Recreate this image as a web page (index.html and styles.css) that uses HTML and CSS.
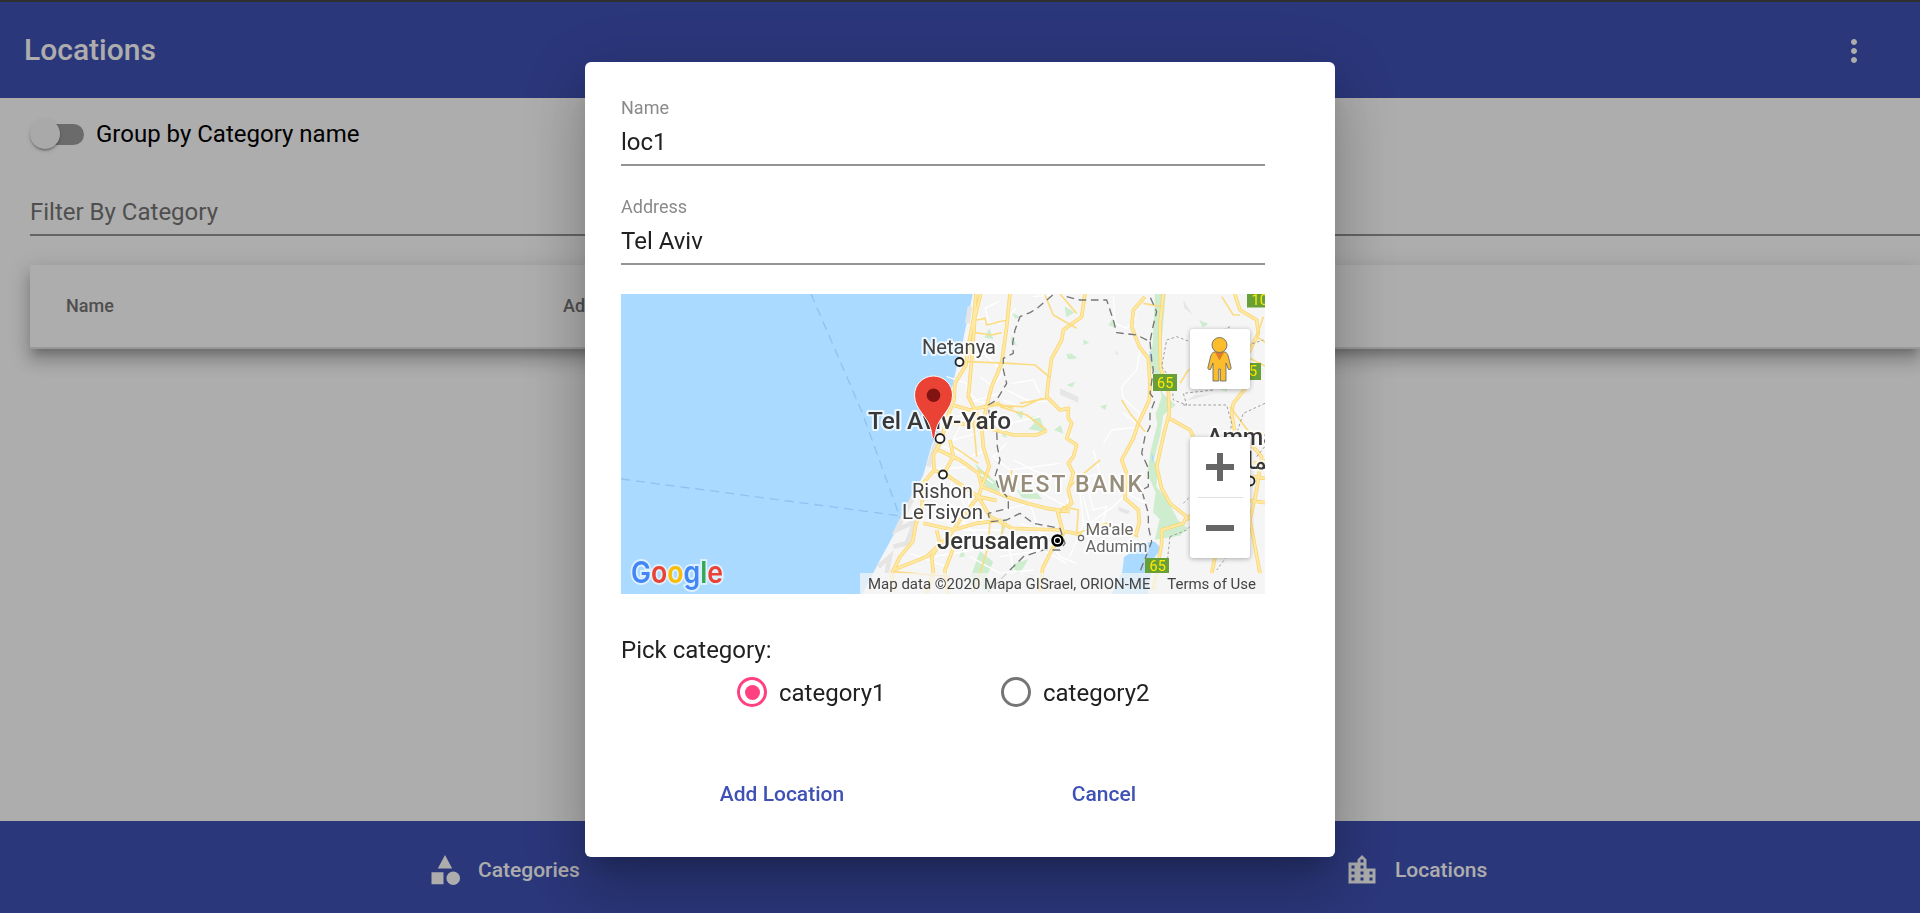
FILE: index.html
```html
<!DOCTYPE html>
<html lang="en">
<head>
<meta charset="utf-8">
<title>Locations</title>
<link rel="stylesheet" href="styles.css">
</head>
<body>
<div class="app">
  <header class="toolbar">
    <h1 class="toolbar-title">Locations</h1>
    <svg class="more" viewBox="0 0 24 24"><path d="M12 8c1.1 0 2-.9 2-2s-.9-2-2-2-2 .9-2 2 .9 2 2 2zm0 2c-1.1 0-2 .9-2 2s.9 2 2 2 2-.9 2-2-.9-2-2-2zm0 6c-1.1 0-2 .9-2 2s.9 2 2 2 2-.9 2-2-.9-2-2-2z"/></svg>
  </header>
  <main class="content">
    <div class="toggle"><span class="track"><span class="thumb"></span></span><span>Group by Category name</span></div>
    <div class="filter">Filter By Category</div>
    <div class="table"><span class="col-name">Name</span><span>Address</span></div>
  </main>
  <footer class="nav">
    <a class="nav-item"><svg class="nav-icon" viewBox="0 0 24 24"><path d="M12 2 7.2 11h9.600z M3 13.500h8v8H3z"/><circle cx="17.500" cy="17.500" r="4.500"/></svg>Categories</a>
    <a class="nav-item nav-item-end"><svg class="nav-icon" viewBox="0 0 24 24"><path d="M15 11V5l-3-3-3 3v2H3v14h18V11h-6zm-8 8H5v-2h2v2zm0-4H5v-2h2v2zm0-4H5V9h2v2zm6 8h-2v-2h2v2zm0-4h-2v-2h2v2zm0-4h-2V9h2v2zm0-4h-2V5h2v2zm6 12h-2v-2h2v2zm0-4h-2v-2h2v2z"/></svg>Locations</a>
  </footer>
</div>
<div class="backdrop">
  <section class="dialog">
    <label class="field"><span class="field-label">Name</span><span class="field-value">loc1</span></label>
    <label class="field"><span class="field-label">Address</span><span class="field-value">Tel Aviv</span></label>
    <div class="map">
      <svg class="map-canvas" viewBox="621 294 644 300">
        <rect class="sea" x="621" y="294" width="644" height="300"/>
        <path class="ferry" d="M811 294L862 412L901 520M621 479L720 492L901 516"/>
        <g transform="translate(860 290) scale(.33333)">
          <path class="land" d="M338 12L322 90L306 165L286 250L270 320L240 405L215 465L190 555L155 625L125 690L60 810L-5 935H1250V0H338Z"/>
          <path class="coast" d="M330 50L322 100M277 310L262 350M240 420L205 530M180 580L150 640L110 720L165 695L140 760L100 770M55 830L90 800L80 850"/>
          <!-- parks and forests -->
          <path class="park" d="M455 68l25 12-14 6zM614 50l28 18-23 14zM388 115l12 32-27-4zM455 135l16 32-18-8zM630 188l22 16-18 4zM620 285l25-8-8 15zM465 367l25-5-5 25zM507 380h32l18 46-52-8 18-18zM582 420l20-15 8 26zM430 425l12 18-15-4zM345 520l60 54 25 30-50-5zM470 600l62 10 15 18-60-3zM310 770l4 30-17 2zM360 783l40 32-22 50-46-5zM425 685l16 15-18 45zM465 820l40-12-27 45-30-15zM340 850l18 5-2 38-24-10zM365 860l35 15-8 30-26-5z"/>
          <path class="park" d="M885 12h32l-14 168 4 130 40 35-37 30-8 55-20 80 12 20-5 60 30 35 35 65 28 25-22 22-76 12 15-62-20-20 8-60-25-55 10-70 20-80-5-30 18-50-12-60-30-40 15-60zM615 50l28 17-22 10zM745 105l15-20 6 30zM670 148l18 10-17 8zM620 190l30 13-27 5zM622 284l22-8-9 14zM720 350l20-8-3 18zM1018 90l28 12-18 10zM1080 298l25-8-5 15z"/>
          <path class="grey" d="M600 295l55 25v18l-55-24zM970 30l28 45-26-22zM765 180l12 12-8 3zM1005 315l50-3-75 20zM775 650l36 13-8 10-27-10zM490 850l40 5-30 20z"/>
          <!-- Dead Sea and river -->
          <path class="water" d="M840 760L885 755L898 770L900 780L882 805L872 850L860 935H745L787 845L792 802L830 775ZM870 180l8 20-5 20-6-10zM874 490l8 10-6 20z"/>
          <!-- minor streets -->
          <path class="street" d="M415 35L375 55L385 90L335 80M470 55L420 100L370 95M520 20L575 15M260 260L320 280L325 330L390 340M330 220L360 180L430 245L400 290L360 260M320 300L350 330L420 310M280 380L370 370L370 440M310 390L280 450L350 430M430 330L480 350M455 280L520 270L540 310M440 300L500 330L560 335M400 410L450 400L540 380M250 470L330 500L380 480M210 540L330 530L400 580M180 590L300 620L350 700M280 560L260 640L330 670M330 620L310 720L430 720M440 460L400 500L450 540L600 520M460 510L530 545L590 560M430 660L510 640L540 730L600 720M530 600L620 650L640 550M480 700L540 720L600 800L650 820M240 730L220 800L340 780M300 690L380 760L500 780M150 790L260 830L270 900M330 800L420 850L520 840M440 740L460 840L530 870M420 800L550 780L620 820"/>
          <path class="street" d="M760 20L765 100L800 115L830 80M840 180L830 240L785 290L790 325L840 370L830 400L790 370M730 460L755 420L825 412M700 480L720 550L650 570M675 560L700 660L740 650L720 730M670 620L690 700L760 650L800 610L860 640M660 610L670 700L630 800"/>
          <!-- highways -->
          <g class="roads road-edge">
            <path id="hw1" d="M348 12L342 80L325 170L318 225L285 280L282 330L260 385L245 450L220 495L222 540L190 580L185 665L168 700L158 755L120 800L98 845L95 905M450 12L440 110L425 220L395 290L380 350L365 410L370 470L388 530L365 590L355 620L300 690L270 735L278 780L255 840L262 910M362 12L345 80L335 210L325 320L350 370L350 410M258 395L370 410L460 435L530 435L560 422M235 480L300 510L355 550L365 590L440 620L500 640L560 655L630 665M270 450L280 500L250 555M220 540L260 555L355 620L390 680L430 700L455 715L600 720L665 735M190 700L280 720L350 700L425 690M100 840L200 800L270 735M355 620L410 632M260 340L330 360L420 340M590 655L610 730L575 780L548 835L540 905M230 720L240 760L215 800L220 850L200 910"/>
            <path id="hw2" d="M675 12L665 80L610 120L605 150L575 205L565 275L560 320L600 360L625 355L625 385L635 400L620 445L650 465L640 500L625 520L640 550L625 600L635 640L600 665M855 20L820 60L815 110L838 170L865 205L870 280L868 330L835 400L820 445L785 510L800 550L795 625L835 660L838 700L825 740M910 12L900 100L900 180L902 235L925 300L928 370L912 430L890 530L905 595L930 640L980 680L970 700L905 720L905 760L880 900M928 385L955 400L990 420L1000 440M980 690L1010 655M1120 0L1140 60L1190 90L1195 130L1160 200L1160 290L1120 340L1115 370L1125 430M1170 460L1205 500L1190 600L1170 690L1200 850M1180 520L1230 510M1180 560L1250 570M1160 630L1230 640M1105 740L1070 780L1055 850"/>
          </g>
          <g class="roads road-fill">
            <use href="#hw1"/><use href="#hw2"/>
          </g>
          <path class="road-small" d="M350 90L375 85L380 105L440 90M345 128L395 135L425 128M320 215L450 220L525 225L570 262M555 15L580 75L650 115M380 345L490 350L545 325M420 350L500 375L560 420M410 340L460 355M480 340L560 325M340 390L350 500M355 520L280 470M455 540L450 580M100 845L270 860M390 690L385 770L340 910M430 700L420 760M390 560L355 540M850 40L905 50M720 510L660 560L630 590M785 330L810 370L855 425M600 12L650 70M1085 20L1120 75L1140 75M960 280L985 240L1120 230M600 670L610 650L655 660L650 730L740 700L835 740M1210 80L1190 140L1220 160M1160 200L1230 235M1110 350L1170 430L1230 430"/>
          <!-- borders -->
          <path class="border" d="M578 15L535 52L510 68L480 80L465 120L458 160L460 190L430 205L430 240L440 280L410 330L385 345L390 390L410 420L412 470L420 510L405 560L415 590L445 625L445 655L385 670L390 695L440 690L480 670L520 700L600 715L615 760L600 780L550 780L490 800L430 860L385 905M620 20L660 30L740 30L760 90L770 128L830 135L870 155L880 105L890 65L870 20M870 155L875 210L880 240L870 310L885 330L870 370L870 410L855 440L845 490L865 535L865 590L845 600L865 670L865 710L875 755L840 845"/>
          <path class="trail" d="M1110 110L1050 140L990 155L950 140L920 150L905 230L935 270L940 330L980 345L970 310L1060 300L1090 250M970 345L1100 345L1115 400L1110 430M1215 340L1150 370L1130 430M1120 180L1210 150M970 640L990 620M930 740L980 720L1000 700M930 740L920 830L880 850M1110 740L1100 800L1070 840M1190 500L1230 450"/>
        </g>
        <g class="shield"><path d="M1247 294h18v13.500h-18zM1153 374h24v17h-24zM1249 363h12v17h-12zM1145 558h24v15h-24z"/></g>
        <g class="shield-text"><text x="1251.500" y="305">10</text><text x="1157" y="388">65</text><text x="1249" y="376">5</text><text x="1149.500" y="571">65</text></g>
        <g class="place">
          <text x="922" y="353.500" textLength="74" lengthAdjust="spacingAndGlyphs">Netanya</text>
          <text x="912" y="498" textLength="61" lengthAdjust="spacingAndGlyphs">Rishon</text>
          <text x="902" y="518.500" textLength="81" lengthAdjust="spacingAndGlyphs">LeTsiyon</text>
          <text class="minor" x="1085.500" y="535" textLength="48" lengthAdjust="spacingAndGlyphs">Ma'ale</text>
          <text class="minor" x="1085.500" y="552" textLength="62" lengthAdjust="spacingAndGlyphs">Adumim</text>
          <text class="region" x="998" y="491.500" textLength="144">WEST BANK</text>
          <text class="city" x="868" y="428.500" textLength="143" lengthAdjust="spacingAndGlyphs">Tel Aviv-Yafo</text>
          <text class="city" x="937" y="549" textLength="112" lengthAdjust="spacingAndGlyphs">Jerusalem</text>
          <text class="city" x="1207" y="445">Amman</text>
          <text class="city" x="1229" y="469">عمان</text>
        </g>
        <g class="dots"><circle cx="959.500" cy="362" r="4"/><circle cx="940" cy="438.500" r="4.500"/><circle cx="943" cy="474.500" r="4"/><circle class="dot-minor" cx="1081" cy="538" r="2.600"/><circle cx="1250" cy="481" r="4.500"/><circle class="dot-capital" cx="1057.500" cy="540.500" r="5"/></g>
        <circle cx="1057.500" cy="540.500" r="2.500"/>
        <path class="pin" d="M933.500 438.500C932 438.500 932 434 931 430C928 416 914.500 410 914.500 395A19 19 0 0 1 952.500 395C952.500 410 939 416 936 430C935 434 935 438.500 933.500 438.500Z"/>
        <circle class="pin-hole" cx="933.500" cy="395.300" r="6.800"/>
        <g class="google"><text y="582.500" textLength="92" lengthAdjust="spacingAndGlyphs" x="631"><tspan class="g-blue">G</tspan><tspan class="g-red">o</tspan><tspan class="g-yellow">o</tspan><tspan class="g-blue">g</tspan><tspan class="g-green">l</tspan><tspan class="g-red">e</tspan></text></g>
      </svg>
      <div class="controls">
        <div class="pegman"><svg class="pegman-icon" viewBox="0 0 25 45"><path d="M6.500 15Q4 17 3.500 20L.8 31Q1 33 3.500 32.500L6 26V44H11.800V32H13.300V44H19V26L21.500 32.500Q24 33 24.200 31L21.500 20Q21 17 18.500 15Z"/><path class="scarf" d="M8 15.500h9l-4.500 8z"/><circle cx="12.500" cy="8" r="7.500"/></svg></div>
        <div class="zoom"><span class="zoom-btn"><svg viewBox="0 0 28 28"><path d="M11 0h6v11h11v6H17v11h-6V17H0v-6h11z"/></svg></span><span class="zoom-line"></span><span class="zoom-btn"><svg viewBox="0 0 28 28"><path d="M0 11h28v6H0z"/></svg></span></div>
      </div>
      <div class="credits"><span>Map data ©2020 Mapa GISrael, ORION-ME</span><span>Terms of Use</span></div>
    </div>
    <p class="pick">Pick category:</p>
    <div class="radios">
      <span class="radio radio-on"><span class="ring"></span><span class="radio-text">category1</span></span>
      <span class="radio"><span class="ring"></span><span class="radio-text">category2</span></span>
    </div>
    <div class="actions"><button class="action">Add Location</button><button class="action">Cancel</button></div>
  </section>
</div>
</body>
</html>
```
FILE: styles.css
```css
* { box-sizing: border-box; }
body { margin: 0; font-family: Roboto, sans-serif; overflow: hidden; }
.app { height: 913px; display: flex; flex-direction: column; background: #fff; overflow: hidden; }
.toolbar { height: 98px; border-top: 2px solid #464646; background: #3f51b5; color: #fff; display: flex; align-items: center; justify-content: space-between; padding: 0 48px 0 24px; }
.toolbar-title { margin: 0; font-size: 30px; font-weight: 500; line-height: 48px; }
.more { width: 36px; height: 36px; margin-top: 2px; fill: #fff; }
.content { flex: 1; padding-left: 30px; }
.toggle { height: 72px; display: flex; align-items: center; gap: 12px; font-size: 24px; }
.track { width: 54px; height: 21px; border-radius: 11px; background: #9e9e9e; display: flex; align-items: center; }
.thumb { width: 30px; height: 30px; border-radius: 50%; background: #fafafa; box-shadow: 0 3px 2px -2px rgba(0,0,0,.2), 0 2px 2px rgba(0,0,0,.14), 0 2px 5px rgba(0,0,0,.12); flex: none; }
.filter { height: 66px; padding-top: 28px; border-bottom: 2px solid #949494; color: #757575; font-size: 24px; line-height: 28px; }
.table { height: 84px; margin-top: 29px; padding: 0 0 2px 36px; display: flex; align-items: center; background: #fff; border-bottom: 2px solid #e0e0e0; font-size: 18px; font-weight: 500; color: #757575; box-shadow: 0 8px 8px -4px rgba(0,0,0,.2), 0 12px 15px 2px rgba(0,0,0,.14), 0 5px 21px 3px rgba(0,0,0,.12); }
.col-name { width: 497px; }
.nav { height: 92px; background: #3f51b5; color: #fff; display: flex; padding-bottom: 2px; font-size: 21px; font-weight: 500; }
.nav-item { width: 918px; padding-left: 427px; display: flex; align-items: center; padding-top: 8px; gap: 15px; }
.nav-item-end { padding-left: 426px; }
.nav-icon { width: 36px; height: 36px; fill: #fff; }
.backdrop { position: fixed; inset: 0; background: rgba(0,0,0,.32); display: flex; justify-content: center; align-items: flex-start; padding-top: 62px; }
.dialog { width: 750px; height: 795px; padding: 36px 70px 0 36px; border-radius: 6px; background: #fff; color: #212121; box-shadow: 0 16px 23px -10px rgba(0,0,0,.2), 0 36px 57px 5px rgba(0,0,0,.14), 0 14px 69px 12px rgba(0,0,0,.12); }
.field { height: 68px; margin-bottom: 31px; display: flex; flex-direction: column; border-bottom: 2px solid #949494; }
.field-label { font-size: 18px; line-height: 20px; color: #8a8a8a; }
.field-value { margin-top: 10px; font-size: 24px; line-height: 28px; }
.map { position: relative; height: 300px; margin-top: -2px; overflow: hidden; }
.map-canvas { display: block; width: 644px; height: 300px; }
.sea { fill: #aadaff; }
.ferry { fill: none; stroke: #8fc1f2; stroke-width: 1.3; stroke-dasharray: 9 6; }
.land { fill: #f5f5f5; }
.coast { fill: none; stroke: #e5e5e5; stroke-width: 14; }
.park { fill: #ceedcf; }
.grey { fill: #e6e6e6; }
.water { fill: #aadaff; }
.street { fill: none; stroke: #fff; stroke-width: 4; }
.roads { fill: none; stroke-linejoin: round; }
.road-edge { stroke: #f9d775; stroke-width: 11; }
.road-fill { stroke: #ffe9a5; stroke-width: 6; }
.road-small { fill: none; stroke: #fbdc83; stroke-width: 5; stroke-linejoin: round; }
.border { fill: none; stroke: #757575; stroke-width: 4; stroke-dasharray: 23 14; stroke-linejoin: round; }
.trail { fill: none; stroke: #8c8c8c; stroke-width: 2.500; stroke-dasharray: 8 7; }
.shield { fill: #689f38; }
.shield-text { fill: #ffeb00; font-size: 14.500px; }
.place { fill: #444; font-size: 19.500px; }
.place text { paint-order: stroke; stroke: rgba(255,255,255,.75); stroke-width: 4px; stroke-linejoin: round; }
.place .minor { font-size: 16px; fill: #666; }
.place .region { fill: #968d7b; font-size: 23px; font-weight: 500; }
.place .city { fill: #383838; font-size: 23.500px; font-weight: 500; }
.dots { fill: #fff; stroke: #222; stroke-width: 1.800; }
.dot-minor { stroke: #666; stroke-width: 1.200; }
.dot-capital { stroke: #000; stroke-width: 2.600; }
.pin { fill: #ea4335; stroke: #fff; stroke-width: 1; }
.pin-hole { fill: #811411; }
.google { font-family: Inter, sans-serif; font-size: 30px; font-weight: 600; }
.google text { paint-order: stroke; stroke: rgba(255,255,255,.6); stroke-width: 4px; }
.g-blue { fill: #4285f4; }
.g-red { fill: #ea4335; }
.g-yellow { fill: #fbbc04; }
.g-green { fill: #34a853; }
.controls { position: absolute; right: 15px; top: 35px; display: flex; flex-direction: column; gap: 48px; }
.pegman, .zoom { width: 60px; background: #fff; border-radius: 3px; box-shadow: 0 1px 5px rgba(0,0,0,.3); display: flex; align-items: center; }
.pegman { height: 60px; justify-content: center; }
.pegman-icon { width: 25px; height: 45px; margin-left: -2px; fill: #fbbd2b; stroke: #6b6b6b; stroke-width: .9; }
.scarf { fill: #e07c2b; stroke: none; }
.zoom { height: 121px; flex-direction: column; }
.zoom-btn { height: 60px; display: flex; align-items: center; }
.zoom-btn svg { width: 28px; height: 28px; fill: #666; }
.zoom-line { width: 45px; height: 1px; background: #e0e0e0; }
.credits { position: absolute; right: 0; bottom: 0; height: 21px; padding: 0 9px 0 8px; width: 405px; display: flex; justify-content: space-between; align-items: center; background: rgba(245,245,245,.72); color: #444; font-size: 15px; white-space: nowrap; }
.pick { margin: 41px 0 0; font-size: 24px; line-height: 30px; }
.radios { display: flex; padding-left: 116px; margin-top: 12px; }
.radio { width: 264px; height: 30px; display: flex; align-items: center; gap: 12px; font-size: 24px; line-height: 30px; }
.radio-text { padding-top: 2px; }
.ring { width: 30px; height: 30px; border: 3px solid #757575; border-radius: 50%; display: flex; align-items: center; justify-content: center; }
.radio-on .ring { border-color: #ff4081; }
.radio-on .ring::after { content: ""; width: 15px; height: 15px; border-radius: 50%; background: #ff4081; }
.actions { display: flex; margin-top: 60px; }
.action { width: 322px; height: 54px; padding: 0; border: 0; background: none; color: #3f51b5; font: 500 21px/54px Roboto, sans-serif; }
```
